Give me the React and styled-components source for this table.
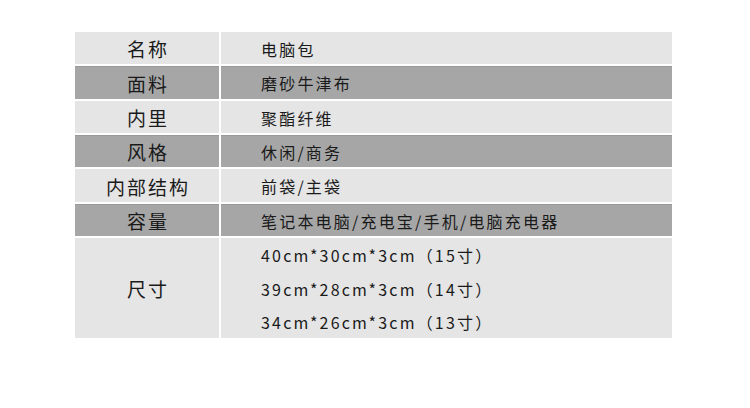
import React from 'react';
import styled, {createGlobalStyle} from "styled-components";

const rows = [
    {label: "名称", value: ["电脑包"]},
    {label: "面料", value: ["磨砂牛津布"], dark: true},
    {label: "内里", value: ["聚酯纤维"]},
    {label: "风格", value: ["休闲/商务"], dark: true},
    {label: "内部结构", value: ["前袋/主袋"]},
    {label: "容量", value: ["笔记本电脑/充电宝/手机/电脑充电器"], dark: true},
    {label: "尺寸", value: ["40cm*30cm*3cm（15寸）", "39cm*28cm*3cm（14寸）", "34cm*26cm*3cm（13寸）"]},
];

const App = () => {
    return (
        <Page>
            <GlobalStyle/>
            <Table>
                {rows.map((row, key) => (
                    <React.Fragment key={key}>
                        <Label $dark={row.dark}>{row.label}</Label>
                        <Value $dark={row.dark}>
                            {row.value.map((line, i) => (
                                <Line key={i}>{line}</Line>
                            ))}
                        </Value>
                    </React.Fragment>
                ))}
            </Table>
        </Page>
    );
};

const GlobalStyle = createGlobalStyle`
  body {
    margin: 0;
    background: #ffffff;
    font-family: "Noto Sans CJK SC", "Noto Sans", sans-serif;
  }
`

const Page = styled.div`
  width: 750px;
  height: 408px;
  padding: 32px 0 0 75px;
  box-sizing: border-box;
`

const Table = styled.div`
  width: 597px;
  height: 306px;
  display: grid;
  grid-template-columns: 144px 1fr;
  grid-template-rows: repeat(6, minmax(0, 1fr)) 100px;
  gap: 2px;
`

const Cell = styled.div`
  min-height: 0;
  box-sizing: border-box;
  background-color: ${p => p.$dark ? "#a6a6a6" : "#e5e5e5"};
  box-shadow: ${p => p.$dark ? "inset 0 1px 0 #999999" : "none"};
  color: #1a1a1a;
  display: flex;
  flex-direction: column;
  justify-content: center;
`

const Label = styled(Cell)`
  align-items: center;
  font-size: 19px;
  line-height: 1.3;
  letter-spacing: 2px;
  padding-top: 3px;
  padding-left: 2px;
`

const Value = styled(Cell)`
  padding-left: 40px;
  padding-top: 2px;
  font-size: 16px;
  letter-spacing: 2.2px;
  gap: 11px;
`

const Line = styled.div`
  line-height: 1.4;
  white-space: nowrap;
`

export default App;
